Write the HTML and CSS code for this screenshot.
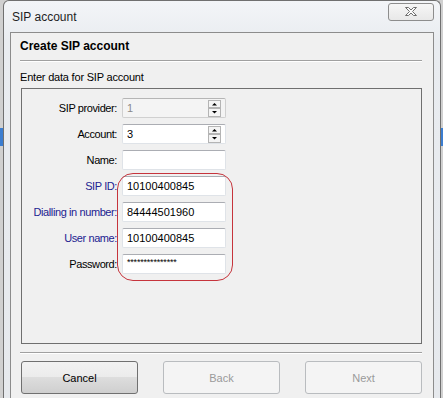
FILE: index.html
```html
<!DOCTYPE html>
<html lang="en">
<head>
  <meta charset="UTF-8" />
  <meta name="viewport" content="width=device-width, initial-scale=1.0" />
  <link rel="stylesheet" href="styles.css">
</head>
<body>
  <div class="window">
    <div class="titlebar">
      <span class="title">SIP account</span>
      <div class="close">
        <svg width="14" height="12" viewBox="0 0 14 12">
          <polygon points="1.5,1.5 4.5,1.5 7,4 9.5,1.5 12.5,1.5 8.5,5.5 12.5,9.5 9.5,9.5 7,7 4.5,9.5 1.5,9.5 5.5,5.5" fill="#fbfbfb" stroke="#6e6e6e" stroke-width="1" stroke-linejoin="round"/>
        </svg>
      </div>
    </div>

    <div class="client">
      <div class="heading">Create SIP account</div>
      <div class="sep"></div>
      <div class="intro">Enter data for SIP account</div>

      <div class="group">
        <div class="form">
          <label>SIP provider:</label>
          <div class="field disabled">
            <span>1</span>
            <svg class="spin" width="13" height="17" viewBox="0 0 13 17">
              <rect x="0.5" y="0.5" width="12" height="7" fill="#f4f4f4" stroke="#b4b4b4"/>
              <rect x="0.5" y="8.5" width="12" height="8" fill="#f4f4f4" stroke="#b4b4b4"/>
              <path d="M4 5.5h5L6.5 3z" fill="#000"/>
              <path d="M4 11h5l-2.5 2.5z" fill="#000"/>
            </svg>
          </div>

          <label>Account:</label>
          <div class="field">
            <span>3</span>
            <svg class="spin" width="13" height="17" viewBox="0 0 13 17">
              <rect x="0.5" y="0.5" width="12" height="7" fill="#f4f4f4" stroke="#b4b4b4"/>
              <rect x="0.5" y="8.5" width="12" height="8" fill="#f4f4f4" stroke="#b4b4b4"/>
              <path d="M4 5.5h5L6.5 3z" fill="#000"/>
              <path d="M4 11h5l-2.5 2.5z" fill="#000"/>
            </svg>
          </div>

          <label>Name:</label>
          <div class="field"></div>

          <label class="req">SIP ID:</label>
          <div class="field">10100400845</div>

          <label class="req">Dialling in number:</label>
          <div class="field">84444501960</div>

          <label class="req">User name:</label>
          <div class="field">10100400845</div>

          <label>Password:</label>
          <div class="field pass">***************</div>
        </div>
        <div class="highlight"></div>
      </div>

      <div class="sep sep-bottom"></div>

      <div class="buttons">
        <button class="btn">Cancel</button>
        <button class="btn" disabled>Back</button>
        <button class="btn" disabled>Next</button>
      </div>
    </div>
  </div>
</body>
</html>
```

FILE: styles.css
```css
html, body {
  margin: 0;
  padding: 0;
  height: 398px;
  overflow: hidden;
}

body {
  font-family: "Liberation Sans", Arial, sans-serif;
  font-size: 11px;
  color: #000000;
  background: linear-gradient(to bottom, #d0d0d0 128px, #3b7dd0 128px, #3b7dd0 146px, #d0d0d0 146px);
}

.window {
  margin-left: 3px;
  width: 424px;
  height: 397px;
  padding: 0 6px;
  border: 1px solid #707070;
  border-bottom: none;
  border-radius: 6px 6px 0 0;
  background: linear-gradient(to bottom, #f3f5f8, #e9ecf0 40px, #e6e9ed);
}

.titlebar {
  height: 31px;
  display: flex;
  align-items: center;
}

.title {
  padding-left: 2px;
  font-size: 12px;
  color: #1e1e1e;
}

.close {
  margin-left: auto;
  align-self: flex-start;
  margin-top: 2px;
  width: 44px;
  height: 16px;
  border: 1px solid #8d8d8d;
  border-radius: 3px;
  background: linear-gradient(to bottom, #f6f6f6, #e8e8e8);
  display: flex;
  align-items: center;
  justify-content: center;
}

.client {
  height: 365px;
  padding: 0 11px 0 9px;
  border: 1px solid #8c8c8c;
  border-bottom: none;
  background-color: #f0f0f0;
}

.heading {
  padding-top: 6px;
  font-size: 12px;
  font-weight: bold;
  line-height: 14px;
  margin-bottom: 7px;
}

.sep {
  border-top: 1px solid #a0a0a0;
  border-bottom: 1px solid #ffffff;
}

.intro {
  margin-top: 8px;
  line-height: 14px;
  margin-bottom: 4px;
  letter-spacing: -0.2px;
}

.group {
  position: relative;
  margin-left: 1px;
  height: 256px;
  box-sizing: border-box;
  border: 1px solid #6f6f6f;
  padding-top: 9px;
}

.form {
  display: grid;
  grid-template-columns: 95px 104px;
  grid-auto-rows: 20px;
  column-gap: 5px;
  row-gap: 6px;
}

.form label {
  text-align: right;
  line-height: 20px;
  white-space: nowrap;
  letter-spacing: -0.4px;
}

.form label.req {
  color: #1c2290;
}

.field {
  display: flex;
  align-items: center;
  padding-left: 4px;
  border: 1px solid #dfe3e8;
  border-top-color: #abadb3;
  border-radius: 2px;
  background-color: #ffffff;
  font-size: 11px;
}

.field.disabled {
  background-color: #f4f4f4;
  color: #8a8a8a;
  border-color: #d0d0d0;
  border-top-color: #b5b5b5;
}

.field.pass {
  align-items: flex-start;
  padding-top: 2px;
  font-size: 9px;
  letter-spacing: -0.2px;
}

.spin {
  margin-left: auto;
  margin-right: 4px;
}

.highlight {
  position: absolute;
  left: 95px;
  top: 84px;
  width: 114px;
  height: 106px;
  border: 1px solid #c6343c;
  border-radius: 16px;
}

.sep-bottom {
  margin-top: 8px;
}

.buttons {
  margin-top: 7px;
  margin-left: 1px;
  display: flex;
  justify-content: space-between;
}

.btn {
  width: 117px;
  height: 33px;
  font-family: "Liberation Sans", Arial, sans-serif;
  font-size: 11px;
  color: #000000;
  border: 1px solid #707070;
  border-radius: 3px;
  background: linear-gradient(to bottom, #f2f2f2 0%, #ebebeb 50%, #dddddd 50%, #cfcfcf 100%);
  padding: 0;
}

.btn:disabled {
  border-color: #b9bcbf;
  background: #f4f4f4;
  color: #9a9a9a;
}
```
